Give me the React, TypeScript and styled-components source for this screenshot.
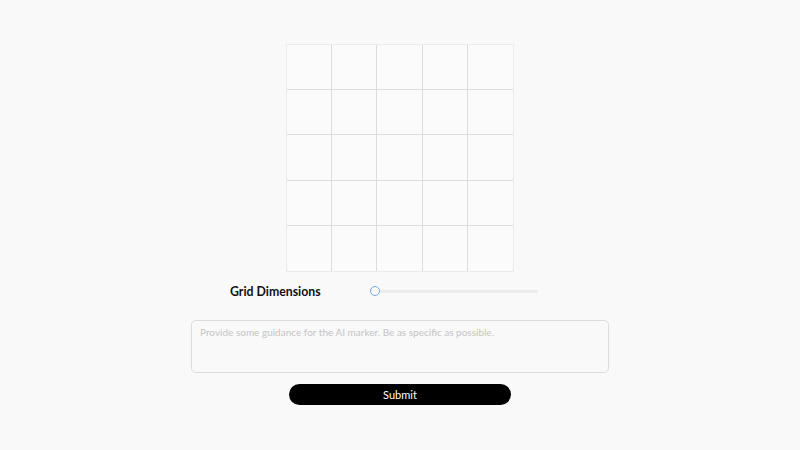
import React, { useState } from 'react'
import styled, { createGlobalStyle } from 'styled-components'

const GlobalStyle = createGlobalStyle`
  html, body {
    margin: 0;
    padding: 0;
    background: #faf9fa;
    font-family: Lato, "Open Sans", sans-serif;
  }
`

const Page = styled.div`
  width: 800px;
  height: 450px;
  display: flex;
  flex-direction: column;
  align-items: center;
  padding-top: 44px;
  box-sizing: border-box;
`

const Board = styled.div<{ size: number }>`
  display: grid;
  grid-template-columns: repeat(${(p) => p.size}, 1fr);
  grid-template-rows: repeat(${(p) => p.size}, 1fr);
  width: 228px;
  height: 228px;
  border: 1px solid #ebebeb;
  box-sizing: border-box;
  background: #fbfbfc;
`

const Cell = styled.div<{ lastCol: boolean; lastRow: boolean }>`
  border-right: ${(p) => (p.lastCol ? 'none' : '1px solid #dcdcdc')};
  border-bottom: ${(p) => (p.lastRow ? 'none' : '1px solid #dcdcdc')};
`

const ControlRow = styled.div`
  width: 418px;
  display: flex;
  align-items: center;
  padding-left: 39px;
  box-sizing: border-box;
  margin-top: 12px;
  height: 14px;
`

const Label = styled.div`
  font-size: 12.3px;
  font-weight: 700;
  color: #111;
  width: 140px;
`

const Track = styled.div`
  position: relative;
  width: 168px;
  height: 3px;
  border-radius: 2px;
  background: #ececec;
`

const Thumb = styled.div`
  position: absolute;
  left: 0;
  top: 50%;
  width: 8px;
  height: 8px;
  margin-top: -5.5px;
  border-radius: 50%;
  border: 1.5px solid #6fa6dc;
  background: #fff;
`

const Guidance = styled.textarea`
  margin-top: 22px;
  width: 418px;
  height: 53px;
  box-sizing: border-box;
  border: 1px solid #dddcdd;
  border-radius: 5px;
  background: #faf9fa;
  padding: 5px 8px;
  font-family: Lato, "Open Sans", sans-serif;
  font-size: 10px;
  resize: none;
  outline: none;
  &::placeholder {
    color: #c4c4c4;
  }
`

const SubmitButton = styled.button`
  margin-top: 11px;
  width: 222px;
  height: 21px;
  border: none;
  border-radius: 11px;
  background: #000;
  color: #fff;
  font-family: Lato, "Open Sans", sans-serif;
  font-size: 11px;
  cursor: pointer;
  padding: 0;
`

const App = () => {
  const [size] = useState(5)
  const cells = []
  for (let r = 0; r < size; r++) {
    for (let c = 0; c < size; c++) {
      cells.push(
        <Cell key={`${r}-${c}`} lastCol={c === size - 1} lastRow={r === size - 1} />
      )
    }
  }

  return (
    <>
      <GlobalStyle />
      <Page>
        <Board size={size}>{cells}</Board>
        <ControlRow>
          <Label>Grid Dimensions</Label>
          <Track>
            <Thumb />
          </Track>
        </ControlRow>
        <Guidance placeholder="Provide some guidance for the AI marker. Be as specific as possible." />
        <SubmitButton>Submit</SubmitButton>
      </Page>
    </>
  )
}

export default App
